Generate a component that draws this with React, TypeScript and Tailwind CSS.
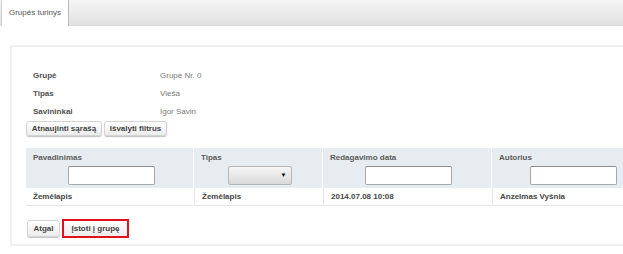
import React from 'react';

const font = { fontFamily: '"Liberation Sans", Arial, sans-serif' };

const Btn: React.FC<{ label: string; className?: string }> = ({ label, className = '' }) => (
  <button
    className={`flex items-center justify-center rounded-[3px] border border-[#d4d4d4] bg-gradient-to-b from-white to-[#ececec] text-[8px] font-bold text-[#444] shadow-[0_1px_1px_rgba(0,0,0,0.25)] ${className}`}
  >
    {label}
  </button>
);

const FilterInput: React.FC<{ w?: string }> = ({ w = 'w-[87px]' }) => (
  <div className={`h-[19px] ${w} rounded-[2px] border border-[#a8a8a8] border-t-[#8c8c8c] bg-white`} />
);

const App: React.FC = () => {
  const info = [
    ['Grupė', 'Grupė Nr. 0'],
    ['Tipas', 'Vieša'],
    ['Savininkai', 'Igor Savin'],
  ];

  const cols = [
    { title: 'Pavadinimas', w: 'w-[167px]', value: 'Žemėlapis', filter: <FilterInput /> },
    {
      title: 'Tipas',
      w: 'w-[129px]',
      value: 'Žemėlapis',
      filter: (
        <div className="flex h-[19px] w-[64px] items-center justify-end rounded-[2px] border border-[#b5b5b5] bg-gradient-to-b from-[#f7f7f7] to-[#d9d9d9] pr-[4px] text-[6px] text-black">
          ▼
        </div>
      ),
    },
    { title: 'Redagavimo data', w: 'w-[169px]', value: '2014.07.08 10:08', filter: <FilterInput /> },
    { title: 'Autorius', w: 'w-[160px]', value: 'Anzelmas Vyšnia', filter: <FilterInput /> },
  ];

  return (
    <div className="h-[254px] w-[623px] overflow-hidden bg-white" style={font}>
      {/* tab bar */}
      <div className="flex h-[26px] border-b border-[#dadada] bg-gradient-to-b from-[#f5f5f5] to-[#e1e1e1]">
        <div className="ml-[1px] -mb-px flex h-[26px] w-[68px] items-center justify-center border-x border-l-[#cfcfcf] border-r-[#b9b9b9] bg-white text-[8px] text-[#555]">
          Grupės turinys
        </div>
      </div>

      {/* panel */}
      <div className="ml-[10px] mt-[19px] h-[201px] border-2 border-r-0 border-[#f0f0f0] pl-[14px]">
        <div className="pl-[7px] pt-[20px]">
          {info.map(([k, v]) => (
            <div key={k} className="flex h-[18px] items-center text-[8px]">
              <span className="w-[127px] font-bold text-[#505050]">{k}</span>
              <span className="text-[#7a7a7a]">{v}</span>
            </div>
          ))}
        </div>
        <div className="flex gap-[2px]">
          <Btn label="Atnaujinti sąrašą" className="h-[15px] w-[76px]" />
          <Btn label="Išvalyti filtrus" className="h-[15px] w-[63px] border-[#c9d4dc]" />
        </div>

        {/* table */}
        <div className="mt-[12px] flex">
          {cols.map((c, i) => (
            <div key={c.title} className={`${c.w} shrink-0 ${i > 0 ? 'border-l border-white' : ''}`}>
              <div className="h-[40px] bg-[#e7ecf0] pl-[7px] pt-[4px]">
                <div className="h-[11px] text-[8px] font-bold leading-[11px] text-[#5c5c5c]">{c.title}</div>
                <div className="mt-[3px] flex justify-center pr-[4px]">{c.filter}</div>
              </div>
              <div
                className={`flex h-[18px] items-center border-b border-[#e3e3e3] pl-[7px] text-[8px] font-bold text-[#454545] ${
                  i > 0 ? 'border-l border-l-[#e6e6e6]' : ''
                }`}
              >
                {c.value}
              </div>
            </div>
          ))}
        </div>

        <div className="mt-[13px] flex items-center gap-[2px] pl-[1px]">
          <Btn label="Atgal" className="h-[17px] w-[33px]" />
          <Btn label="Įstoti į grupę" className="h-[19px] w-[67px] rounded-none border-2 border-[#e0101c] shadow-none" />
        </div>
      </div>
    </div>
  );
};

export default App;
